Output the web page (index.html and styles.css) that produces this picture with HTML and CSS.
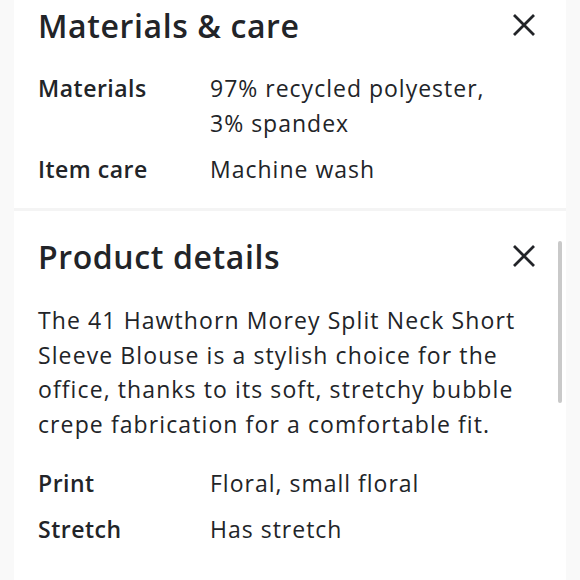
FILE: index.html
```html
<!DOCTYPE html>
<html>
<head>
<meta charset="utf-8">
<link rel="stylesheet" href="styles.css">
</head>
<body>
<div class="panel">
  <section class="section first">
    <div class="head">
      <h2 class="title">Materials &amp; care</h2>
      <svg class="close" viewBox="0 0 24 24" width="24" height="24"><path d="M2 2 L22 22 M22 2 L2 22" stroke="#222428" stroke-width="2.8" stroke-linecap="butt" fill="none"/></svg>
    </div>
    <div class="rows">
      <div class="row"><div class="label">Materials</div><div class="value">97% recycled polyester,<br>3% spandex</div></div>
      <div class="row"><div class="label">Item care</div><div class="value">Machine wash</div></div>
    </div>
  </section>
  <div class="divider"></div>
  <section class="section second">
    <div class="scrollbar"></div>
    <div class="head">
      <h2 class="title">Product details</h2>
      <svg class="close" viewBox="0 0 24 24" width="24" height="24"><path d="M2 2 L22 22 M22 2 L2 22" stroke="#222428" stroke-width="2.8" stroke-linecap="butt" fill="none"/></svg>
    </div>
    <p class="desc">The 41 Hawthorn Morey Split Neck Short Sleeve Blouse is a stylish choice for the office, thanks to its soft, stretchy bubble crepe fabrication for a comfortable fit.</p>
    <div class="rows">
      <div class="row"><div class="label">Print</div><div class="value">Floral, small floral</div></div>
      <div class="row"><div class="label">Stretch</div><div class="value">Has stretch</div></div>
    </div>
  </section>
</div>
</body>
</html>
```
FILE: styles.css
```css
html, body {
  margin: 0;
  padding: 0;
  background: #f9f9f9;
}
body {
  font-family: "Open Sans", "Noto Sans", sans-serif;
  color: #222428;
  height: 580px;
  overflow: hidden;
}
.panel {
  margin: 0 14px;
  background: #ffffff;
  min-height: 580px;
}
.section {
  position: relative;
  padding: 0 30px 0 24px;
}
.first {
  padding-bottom: 21px;
}
.second {
  padding-top: 20px;
}
.divider {
  height: 3px;
  background: #f4f4f4;
}
.head {
  display: flex;
  align-items: center;
  justify-content: space-between;
  height: 50px;
}
.title {
  margin: 0;
  font-size: 32px;
  font-weight: 600;
  letter-spacing: 0.6px;
}
.close {
  display: block;
}
.rows {
  display: flex;
  flex-direction: column;
  gap: 11px;
  margin-top: 21px;
}
.second .rows {
  margin-top: 24px;
}
.row {
  display: flex;
  font-size: 23px;
  line-height: 35px;
  letter-spacing: 1px;
}
.label {
  width: 172px;
  flex: none;
  font-weight: 600;
  letter-spacing: 0.5px;
}
.value {
  font-weight: 400;
}
.desc {
  margin: 22px 0 0;
  font-size: 23px;
  line-height: 34.7px;
  letter-spacing: 1.1px;
}
.scrollbar {
  position: absolute;
  right: 4px;
  top: 30px;
  width: 4px;
  height: 162px;
  border-radius: 2px;
  background: #c9c9c9;
}
```
